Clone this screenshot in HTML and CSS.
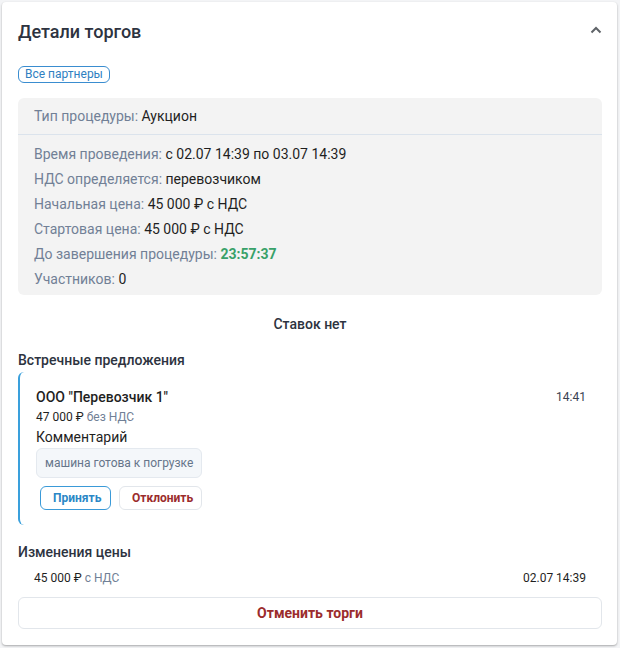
FILE: index.html
```html
<!DOCTYPE html>
<html lang="ru">
<head>
<meta charset="utf-8">
<link rel="stylesheet" href="styles.css">
</head>
<body>
<div class="card">
  <div class="header">
    <h2 class="title">Детали торгов</h2>
    <svg class="chev" width="12" height="8" viewBox="0 0 12 8"><path d="M1.5 6.5 L6 2 L10.5 6.5" fill="none" stroke="#5f6368" stroke-width="2"/></svg>
  </div>
  <span class="chip">Все партнеры</span>
  <div class="info">
    <div class="info-top"><span class="lbl">Тип процедуры:</span> Аукцион</div>
    <div class="info-body">
      <div class="row"><span class="lbl">Время проведения:</span> с 02.07 14:39 по 03.07 14:39</div>
      <div class="row"><span class="lbl">НДС определяется:</span> перевозчиком</div>
      <div class="row"><span class="lbl">Начальная цена:</span> 45 000 ₽ с НДС</div>
      <div class="row"><span class="lbl">Стартовая цена:</span> 45 000 ₽ с НДС</div>
      <div class="row"><span class="lbl">До завершения процедуры:</span> <span class="green">23:57:37</span></div>
      <div class="row"><span class="lbl">Участников:</span> 0</div>
    </div>
  </div>
  <div class="nobids">Ставок нет</div>
  <div class="section">Встречные предложения</div>
  <div class="offer">
    <div class="offer-head">
      <span class="offer-name">ООО "Перевозчик 1"</span>
      <span class="offer-time">14:41</span>
    </div>
    <div class="offer-price">47 000 ₽ <span class="muted">без НДС</span></div>
    <div class="offer-cmt">Комментарий</div>
    <div class="cmt-box">машина готова к погрузке</div>
    <div class="actions">
      <button class="btn btn-accept">Принять</button>
      <button class="btn btn-reject">Отклонить</button>
    </div>
  </div>
  <div class="section section-changes">Изменения цены</div>
  <div class="change-row">
    <span>45 000 ₽ <span class="muted">с НДС</span></span>
    <span>02.07 14:39</span>
  </div>
  <button class="cancel">Отменить торги</button>
</div>
</body>
</html>
```

FILE: styles.css
```css
* { box-sizing: border-box; }
html, body { margin: 0; }
body {
  background: #f3f4f6;
  padding: 2px 3px 3px 2px;
  font-family: Roboto, "Noto Sans", Arial, sans-serif;
  color: #1f1f1f;
}
.card {
  width: 615px;
  background: #fff;
  border-radius: 4px;
  box-shadow: 0 1px 2px rgba(0,0,0,0.25), 0 1px 3px rgba(0,0,0,0.08);
  padding: 16px 15px 16px 16px;
  display: flex;
  flex-direction: column;
  align-items: stretch;
}
.header {
  display: flex;
  justify-content: space-between;
  align-items: center;
  height: 28px;
}
.title {
  margin: 0;
  font-size: 18px;
  font-weight: 500;
  line-height: 28px;
  color: #2d3340;
}
.chev { margin-right: 0; margin-top: -4px; }
.chip {
  align-self: flex-start;
  margin-top: 20px;
  border: 1px solid #3a8dd0;
  border-radius: 6px;
  color: #2f7fc1;
  font-size: 12px;
  line-height: 15px;
  padding: 0 6px;
}
.info {
  margin-top: 15px;
  background: #f3f3f3;
  border-radius: 6px;
  font-size: 14px;
  color: #1f1f1f;
}
.info-top {
  padding: 8px 16px 8px;
  line-height: 20px;
  border-bottom: 1px solid #dbe3ec;
}
.info-body { padding: 7px 16px 3px; }
.row { line-height: 25px; }
.lbl { color: #718096; }
.green { color: #38a169; font-weight: 700; }
.nobids {
  margin-top: 19px;
  text-align: center;
  font-size: 14px;
  font-weight: 500;
  line-height: 20px;
  color: #2d3340;
}
.section {
  margin-top: 16px;
  font-size: 14px;
  font-weight: 500;
  line-height: 20px;
  color: #2d3340;
}
.offer {
  margin-top: 2px;
  border-left: 2px solid #3aa0dc;
  border-radius: 6px 0 0 6px;
  padding: 15px 16px 15px 16px;
}
.offer-head {
  display: flex;
  justify-content: space-between;
  align-items: center;
  line-height: 20px;
}
.offer-name { font-size: 14px; font-weight: 500; color: #1f1f1f; }
.offer-time { font-size: 12px; color: #3a4250; }
.offer-price { font-size: 12px; line-height: 20px; color: #1f1f1f; }
.muted { color: #718096; }
.offer-cmt { font-size: 14px; line-height: 20px; color: #1f1f1f; }
.cmt-box {
  display: inline-block;
  margin-top: 1px;
  background: #f4f7fa;
  border: 1px solid #e4e9ef;
  border-radius: 6px;
  padding: 5px 8px;
  font-size: 12px;
  line-height: 18px;
  color: #66758a;
}
.actions {
  display: flex;
  gap: 8px;
  margin-top: 8px;
  padding-left: 4px;
}
.btn {
  height: 24px;
  border-radius: 6px;
  background: #fff;
  font-family: inherit;
  font-size: 12px;
  font-weight: 700;
  padding: 0 12px;
  cursor: pointer;
}
.btn-accept { border: 1px solid #3a9ad8; color: #2b87c6; width: 71px; }
.btn-reject { border: 1px solid #e2e6eb; color: #9b2c2c; width: 83px; }
.section-changes { margin-top: 17px; }
.change-row {
  display: flex;
  justify-content: space-between;
  padding: 0 16px;
  font-size: 12px;
  line-height: 20px;
  margin-top: 6px;
  color: #1f1f1f;
}
.cancel {
  margin-top: 9px;
  height: 32px;
  background: #fff;
  border: 1px solid #e2e6eb;
  border-radius: 6px;
  font-family: inherit;
  font-size: 14px;
  font-weight: 700;
  color: #9b2c2c;
}
```
